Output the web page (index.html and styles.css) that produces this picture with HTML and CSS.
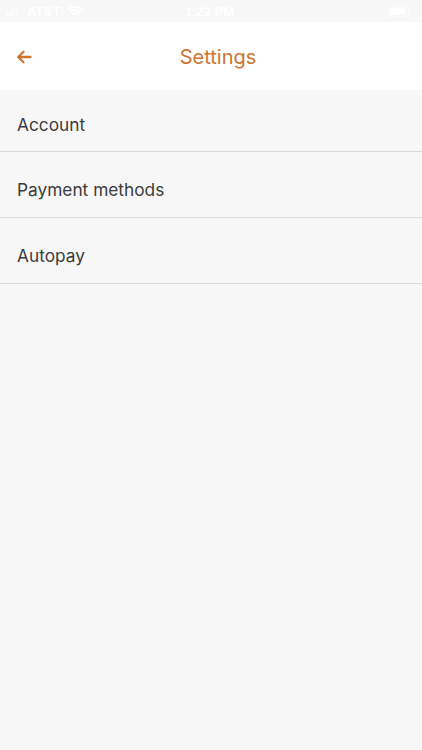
FILE: index.html
```html
<!DOCTYPE html>
<html>
<head>
<meta charset="utf-8">
<link rel="stylesheet" href="styles.css">
</head>
<body>
<div class="app">
  <div class="status">
    <div class="status-left">
      <svg class="signal" width="14" height="10" viewBox="0 0 14 10"><rect x="0" y="7" width="2" height="3" fill="#fff"/><rect x="3" y="5" width="2" height="5" fill="#fff"/><rect x="6" y="3" width="2" height="7" fill="#fff" opacity="0.5"/><rect x="9" y="1" width="2" height="9" fill="#fff" opacity="0.5"/></svg>
      <span class="carrier">AT&amp;T</span>
      <svg class="wifi" width="16" height="12" viewBox="0 0 16 12"><path d="M1 4.5a10 10 0 0 1 14 0M3.5 7a6.5 6.5 0 0 1 9 0M6 9.5a3 3 0 0 1 4 0" stroke="#fff" stroke-width="1.8" fill="none" stroke-linecap="round"/></svg>
    </div>
    <div class="time">1:22 PM</div>
    <div class="status-right">
      <svg width="24" height="11" viewBox="0 0 24 11"><rect x="0.5" y="0.5" width="20" height="10" rx="2.5" fill="none" stroke="#fff" opacity="0.6"/><rect x="2" y="2" width="15" height="7" rx="1.5" fill="#fff"/><rect x="21.5" y="3.5" width="1.5" height="4" rx="0.7" fill="#fff" opacity="0.6"/></svg>
    </div>
  </div>
  <header class="header">
    <div class="back">
      <svg width="16" height="14" viewBox="0 0 16 14"><path d="M14.5 7H2.5M7.5 1.8L2.2 7l5.3 5.2" stroke="#cd7430" stroke-width="2.3" fill="none" stroke-linecap="round" stroke-linejoin="round"/></svg>
    </div>
    <h1 class="title">Settings</h1>
    <div class="spacer"></div>
  </header>
  <ul class="list">
    <li class="row first">Account</li>
    <li class="row">Payment methods</li>
    <li class="row">Autopay</li>
  </ul>
</div>
</body>
</html>
```
FILE: styles.css
```css
* { box-sizing: border-box; }
html, body { margin: 0; padding: 0; }
body {
  background: #f7f7f7;
  font-family: "Inter", "Open Sans", sans-serif;
  width: 422px;
  height: 750px;
  overflow: hidden;
}
.app { display: flex; flex-direction: column; height: 750px; }
.status {
  height: 22px;
  display: flex;
  align-items: center;
  justify-content: space-between;
  padding: 0 10px 0 7px;
  color: #fff;
  font-family: "Liberation Sans", sans-serif;
  font-size: 13px;
  font-weight: bold;
  background: #f7f7f7;
}
.status-left { display: flex; align-items: center; gap: 6px; width: 120px; }
.status-right { width: 120px; display: flex; justify-content: flex-end; }
.time { flex: 1; text-align: center; }
.header {
  height: 68px;
  background: #fff;
  display: flex;
  align-items: center;
  padding: 0 16px;
}
.back { width: 40px; display: flex; align-items: center; padding-top: 1px; }
.spacer { width: 40px; }
.title {
  flex: 1;
  margin: 0;
  text-align: center;
  font-weight: 400;
  font-size: 20px;
  color: #cd7430;
  padding-left: 14px;
  padding-top: 2px;
}
.list { list-style: none; margin: 0; padding: 0; }
.row {
  height: 66px;
  display: flex;
  align-items: center;
  padding-left: 17px;
  padding-top: 10px;
  font-size: 17.3px;
  color: #3c3c3c;
  border-bottom: 1px solid #d9d9d9;
}
.row.first { height: 62px; padding-top: 8px; }
```
